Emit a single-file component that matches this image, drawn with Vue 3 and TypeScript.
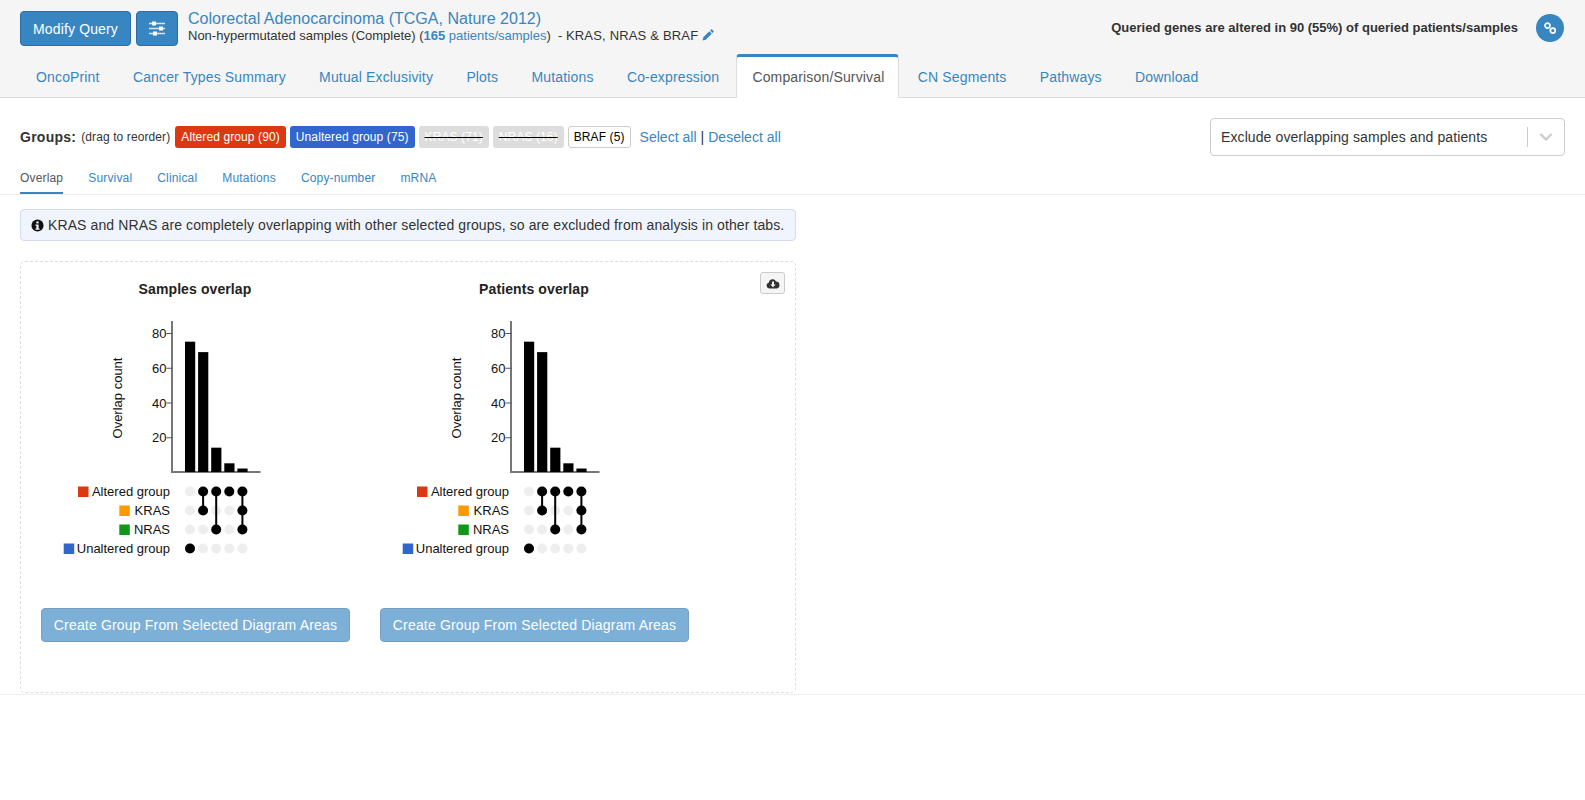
<script setup lang="ts">
const tabs = ['OncoPrint', 'Cancer Types Summary', 'Mutual Exclusivity', 'Plots', 'Mutations', 'Co-expression', 'Comparison/Survival', 'CN Segments', 'Pathways', 'Download']
const subTabs = ['Overlap', 'Survival', 'Clinical', 'Mutations', 'Copy-number', 'mRNA']
const charts = ['Samples overlap', 'Patients overlap']
const bars = [75, 69, 14, 5, 2]
const barX = (i: number) => 124.5 + i * 13.1
const ticks = [80, 60, 40, 20]
const tickY = (v: number) => 163.5 - v * 1.7375
const rows = [
  { label: 'Altered group', color: '#dc3912', sw: 17.5 },
  { label: 'KRAS', color: '#ff9900', sw: 58.8 },
  { label: 'NRAS', color: '#109618', sw: 58.8 },
  { label: 'Unaltered group', color: '#3366cc', sw: 3.2 },
]
const rowY = (i: number) => 182.5 + i * 19
// active rows per column
const cols = [[3], [0, 1], [0, 2], [0], [0, 1, 2]]
const colX = (i: number) => 129.5 + i * 13.1
</script>

<template>
  <div class="page">
    <header class="head">
      <div class="top">
        <button class="btn modify">Modify Query</button>
        <button class="btn sliders" aria-label="settings">
          <svg width="16" height="15" viewBox="0 0 16 15">
            <path d="M0 2.5h16M0 7.5h16M0 12.5h16" stroke="#fff" stroke-opacity="0.8" stroke-width="1.6" />
            <rect x="3" y="0.5" width="4" height="4" fill="#fff" />
            <rect x="10" y="5.5" width="4" height="4" fill="#fff" />
            <rect x="4" y="10.5" width="4" height="4" fill="#fff" />
          </svg>
        </button>
        <div class="study">
          <a class="study-title">Colorectal Adenocarcinoma (TCGA, Nature 2012)</a>
          <div class="study-sub">
            Non-hypermutated samples (Complete) (<a><b>165</b> patients/samples</a>)&nbsp; - <span class="genes">KRAS, NRAS &amp; BRAF</span>
            <svg class="pencil" width="12" height="12" viewBox="0 0 12 12">
              <path d="M0.5 11.5l.8-3.3 6-6 2.5 2.5-6 6zM8.1 1.4l.9-.9a.8.8 0 0 1 1.1 0l1.4 1.4a.8.8 0 0 1 0 1.1l-.9.9z" fill="#3786c2" />
            </svg>
          </div>
        </div>
        <div class="altered">Queried genes are altered in 90 (55%) of queried patients/samples</div>
        <span class="link-circle">
          <svg width="14" height="14" viewBox="0 0 14 14" fill="none" stroke="#fff" stroke-width="1.7">
            <circle cx="4.5" cy="4.6" r="2.5" />
            <circle cx="9.8" cy="9.6" r="2.5" />
          </svg>
        </span>
      </div>
      <nav class="tabs">
        <a v-for="t in tabs" :key="t" class="tab" :class="{ active: t === 'Comparison/Survival' }">{{ t }}</a>
      </nav>
    </header>

    <section class="groups">
      <div class="group-list">
        <b class="groups-label">Groups:</b>
        <span class="hint">(drag to reorder)</span>
        <span class="badge red">Altered group (90)</span>
        <span class="badge blue">Unaltered group (75)</span>
        <span class="badge off">KRAS (71)</span>
        <span class="badge off">NRAS (16)</span>
        <span class="badge white">BRAF (5)</span>
        <span class="select-links"><a>Select all</a> | <a>Deselect all</a></span>
      </div>
      <div class="select">
        <span class="select-text">Exclude overlapping samples and patients</span>
        <span class="select-sep"></span>
        <svg class="chev" width="14" height="10" viewBox="0 0 14 10" fill="none">
          <path d="M1.5 2l5.5 5.5L12.5 2" stroke="#ccc" stroke-width="2.4" />
        </svg>
      </div>
    </section>

    <nav class="subtabs">
      <a v-for="(t, i) in subTabs" :key="t" class="subtab" :class="{ active: i === 0 }">{{ t }}</a>
    </nav>

    <main class="content">
      <div class="alert">
        <svg width="13" height="13" viewBox="0 0 14 14">
          <circle cx="7" cy="7" r="6.5" fill="#111" />
          <rect x="5.8" y="2.6" width="2.4" height="2.2" fill="#f0f4fc" />
          <path d="M4.8 6h3.4v4.2h1v1.3H4.8v-1.3h1V7.3h-1z" fill="#f0f4fc" />
        </svg>
        <span>KRAS and NRAS are completely overlapping with other selected groups, so are excluded from analysis in other tabs.</span>
      </div>

      <div class="panel">
        <button class="save" aria-label="download">
          <svg width="14" height="11" viewBox="0 0 14 11">
            <path d="M3.4 10.5a3 3 0 0 1-.6-5.9 3.8 3.8 0 0 1 7.2-1.2 3.6 3.6 0 0 1 .7 7.1z" fill="#333" />
            <path d="M6 3.5h2v3h1.7L7 9.2 4.3 6.5H6z" fill="#f5f5f5" />
          </svg>
        </button>
        <div v-for="c in charts" :key="c" class="chart">
          <svg class="plot" width="339" height="300" viewBox="0 0 339 300">
            <text x="174" y="32" text-anchor="middle" class="plot-title">{{ c }}</text>
            <g transform="translate(39.5 47)">
              <text transform="translate(61 89) rotate(-90)" text-anchor="middle" class="plot-text">Overlap count</text>
              <path d="M111.5 12V163H200" fill="none" stroke="#777" stroke-width="2" />
              <g v-for="v in ticks" :key="v">
                <path :d="`M106 ${tickY(v)}H112`" stroke="#555" stroke-width="1" />
                <text x="106" :y="tickY(v) + 4.5" text-anchor="end" class="plot-text">{{ v }}</text>
              </g>
              <rect v-for="(b, i) in bars" :key="i" :x="barX(i)" :y="163 - b * 1.7375" width="10.2" :height="b * 1.7375" fill="#000" />
              <g v-for="(r, i) in rows" :key="r.label">
                <rect :x="r.sw" :y="rowY(i) - 5" width="10.5" height="10.5" :fill="r.color" />
                <text x="109.5" :y="rowY(i) + 4.5" text-anchor="end" class="plot-text">{{ r.label }}</text>
                <circle v-for="(_, j) in cols" :key="j" :cx="colX(j)" :cy="rowY(i)" r="5" fill="#eee" />
              </g>
              <g v-for="(col, j) in cols" :key="j">
                <path v-if="col.length > 1" :d="`M${colX(j)} ${rowY(col[0])}V${rowY(col[col.length - 1])}`" stroke="#000" stroke-width="2" />
                <circle v-for="r in col" :key="r" :cx="colX(j)" :cy="rowY(r)" r="5" fill="#000" />
              </g>
            </g>
          </svg>
          <button class="create">Create Group From Selected Diagram Areas</button>
        </div>
      </div>
    </main>
    <div class="rule"></div>
  </div>
</template>

<style>
html, body { margin: 0; background: #fff; }
</style>

<style scoped>
.page {
  font-family: "Liberation Sans", Arial, sans-serif;
  font-size: 14px;
  color: #333;
  width: 1585px;
  height: 800px;
  overflow: hidden;
}
a { color: #3786c2; text-decoration: none; }
.head {
  background: #f5f5f5;
  border-bottom: 1px solid #ddd;
  height: 97px;
  box-sizing: content-box;
  display: flex;
  flex-direction: column;
}
.top {
  display: flex;
  align-items: flex-start;
  padding: 11px 21px 0 20px;
  height: 44px;
}
.btn {
  background: #3786c2;
  border: 1px solid #2e6da4;
  border-radius: 4px;
  color: #fff;
  font: 14px "Liberation Sans", Arial, sans-serif;
  letter-spacing: 0.15px;
  height: 35px;
  padding: 0;
  display: flex;
  align-items: center;
  justify-content: center;
}
.modify { width: 111px; }
.sliders { width: 42px; margin-left: 5px; }
.study { margin-left: 10px; line-height: 16px; }
.study-title { font-size: 16px; display: block; line-height: 16px; letter-spacing: 0.02px; }
.study-sub { font-size: 13px; margin-top: 1px; white-space: nowrap; }
.study-sub b { font-weight: 700; }
.genes { letter-spacing: 0.18px; }
.pencil { vertical-align: -1px; margin-left: 4px; }
.altered {
  margin-left: auto;
  font-weight: 700;
  font-size: 13px;
  line-height: 34px;
}
.link-circle {
  width: 28px;
  height: 28px;
  border-radius: 50%;
  background: #3786c2;
  margin: 3px 0 0 18px;
  display: flex;
  align-items: center;
  justify-content: center;
}
.tabs {
  display: flex;
  height: 42px;
  padding-left: 21px;
  align-items: flex-end;
  letter-spacing: 0.15px;
}
.tab {
  padding: 0 15px;
  height: 42px;
  line-height: 44px;
  margin-right: 3.3px;
  white-space: nowrap;
}
.tab.active {
  background: #fff;
  color: #555;
  border: 1px solid #ddd;
  border-top: 3px solid #3786c2;
  border-bottom: 0;
  border-radius: 4px 4px 0 0;
  height: 41px;
  line-height: 41px;
  padding-right: 14px;
  margin-bottom: -1px;
  margin-left: -1px;
  z-index: 1;
}
.groups {
  display: flex;
  justify-content: space-between;
  padding: 20px 20px 0;
  height: 38px;
}
.group-list { display: flex; align-items: center; height: 38px; }
.groups-label { font-size: 14px; letter-spacing: 0.25px; }
.hint { font-size: 12px; margin-left: 5px; color: #333; letter-spacing: 0.1px; }
.badge {
  font-size: 12px;
  height: 22px;
  line-height: 22px;
  border-radius: 3px;
  padding: 0 6px;
  margin-left: 4px;
  white-space: nowrap;
  color: #fff;
  letter-spacing: 0.1px;
}
.hint + .badge { margin-left: 5px; }
.red { background: #dc3912; }
.blue { background: #3366cc; }
.off {
  background: #ddd;
  color: #fff;
  text-decoration: line-through;
  text-decoration-color: #000;
  text-decoration-thickness: 1px;
}
.white {
  background: #fff;
  color: #000;
  border: 1px solid #ccc;
  height: 20px;
  line-height: 20px;
  padding: 0 5px;
}
.select-links { margin-left: 9px; letter-spacing: 0.03px; }
.select {
  width: 355px;
  height: 38px;
  box-sizing: border-box;
  border: 1px solid #ccc;
  border-radius: 4px;
  display: flex;
  align-items: center;
  padding-left: 10px;
  position: relative;
}
.select-text { flex: 1; white-space: nowrap; letter-spacing: 0.1px; }
.select-sep { width: 1px; height: 20px; background: #ccc; }
.chev { margin: 0 11px; }
.subtabs {
  display: flex;
  gap: 25px;
  padding: 0 20px;
  margin-top: 0;
  height: 38px;
  box-sizing: content-box;
  border-bottom: 1px solid #eee;
  font-size: 12px;
  letter-spacing: 0.17px;
}
.subtab {
  height: 38px;
  line-height: 44px;
  box-sizing: border-box;
}
.subtab.active {
  color: #555;
  border-bottom: 2px solid #3786c2;
}
.content { padding: 14px 20px 0; height: 499px; box-sizing: border-box; }
.alert {
  width: 776px;
  height: 32px;
  box-sizing: border-box;
  background: #f0f4fc;
  border: 1px solid #d5dcee;
  border-radius: 4px;
  display: flex;
  align-items: center;
  gap: 4px;
  padding-left: 10px;
  white-space: nowrap;
  letter-spacing: 0.105px;
}
.panel {
  position: relative;
  margin-top: 20px;
  width: 776px;
  height: 432px;
  box-sizing: border-box;
  border: 1px dashed #ddd;
  border-radius: 5px;
  display: flex;
  padding-left: 0;
}
.save {
  position: absolute;
  top: 10px;
  right: 10px;
  width: 25px;
  height: 22px;
  padding: 0;
  background: #f5f5f5;
  border: 1px solid #ccc;
  border-radius: 3px;
  display: flex;
  align-items: center;
  justify-content: center;
}
.chart {
  width: 339px;
  display: flex;
  flex-direction: column;
  align-items: flex-start;
  padding-left: 0;
}
.plot { display: block; margin: 0 0 0 0; }
.plot-title { font: 700 14px "Liberation Sans", Arial, sans-serif; letter-spacing: 0.1px; fill: #222; }
.plot-text { font: 13px "Liberation Sans", Arial, sans-serif; fill: #111; }
.create {
  margin: 46px 0 0 20px;
  width: 309px;
  height: 34px;
  background: #3786c2;
  opacity: 0.65;
  color: #fff;
  border: 1px solid #2e6da4;
  border-radius: 4px;
  font: 14px "Liberation Sans", Arial, sans-serif;
  letter-spacing: 0.18px;
  padding: 0;
  white-space: nowrap;
}
.rule { border-top: 1px solid #eee; }
</style>
